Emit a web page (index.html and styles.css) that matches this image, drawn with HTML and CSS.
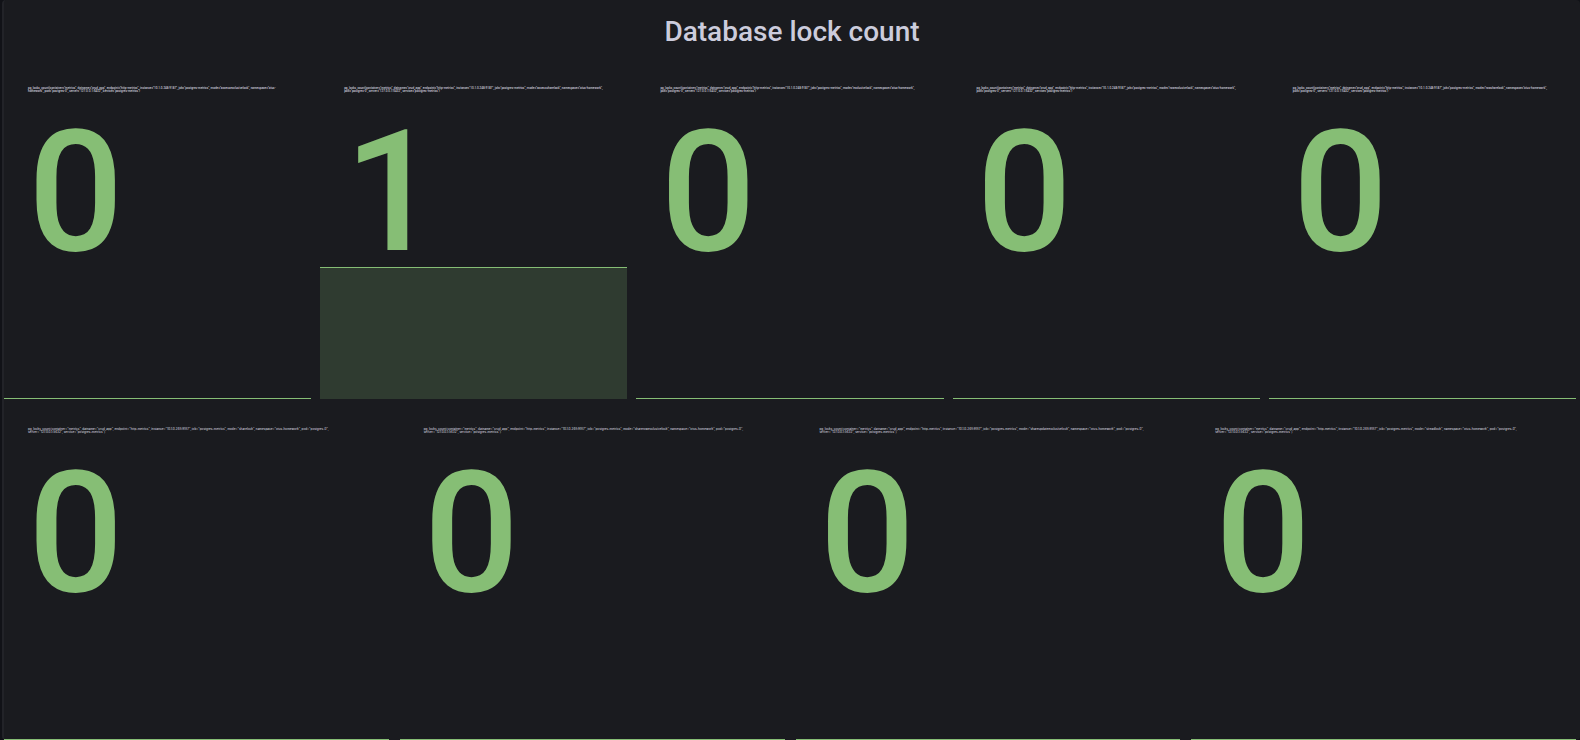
FILE: index.html
```
<!DOCTYPE html>
<html lang="en">
<head>
<meta charset="utf-8">
<title>Database lock count</title>
<link rel="stylesheet" href="styles.css">
</head>
<body>
<main class="panel">
  <header class="panel-header"><h1 class="panel-title">Database lock count</h1></header>
  <div class="stats">
    <div class="row row-five">
      <section class="stat"><p class="label">pg_locks_count{container="metrics", datname="crud_app", endpoint="http-metrics", instance="10.1.0.248:9187", job="postgres-metrics", mode="accessexclusivelock", namespace="otus-homework", pod="postgres-0", server="127.0.0.1:5432", service="postgres-metrics"}</p><div class="value">0</div><div class="spark"></div></section>
      <section class="stat"><p class="label">pg_locks_count{container="metrics", datname="crud_app", endpoint="http-metrics", instance="10.1.0.248:9187", job="postgres-metrics", mode="accesssharelock", namespace="otus-homework", pod="postgres-0", server="127.0.0.1:5432", service="postgres-metrics"}</p><div class="value">1</div><div class="spark spark-filled"></div></section>
      <section class="stat"><p class="label">pg_locks_count{container="metrics", datname="crud_app", endpoint="http-metrics", instance="10.1.0.248:9187", job="postgres-metrics", mode="exclusivelock", namespace="otus-homework", pod="postgres-0", server="127.0.0.1:5432", service="postgres-metrics"}</p><div class="value">0</div><div class="spark"></div></section>
      <section class="stat"><p class="label">pg_locks_count{container="metrics", datname="crud_app", endpoint="http-metrics", instance="10.1.0.248:9187", job="postgres-metrics", mode="rowexclusivelock", namespace="otus-homework", pod="postgres-0", server="127.0.0.1:5432", service="postgres-metrics"}</p><div class="value">0</div><div class="spark"></div></section>
      <section class="stat"><p class="label">pg_locks_count{container="metrics", datname="crud_app", endpoint="http-metrics", instance="10.1.0.248:9187", job="postgres-metrics", mode="rowsharelock", namespace="otus-homework", pod="postgres-0", server="127.0.0.1:5432", service="postgres-metrics"}</p><div class="value">0</div><div class="spark"></div></section>
    </div>
    <div class="row row-four">
      <section class="stat"><p class="label">pg_locks_count{container="metrics", datname="crud_app", endpoint="http-metrics", instance="10.1.0.248:9187", job="postgres-metrics", mode="sharelock", namespace="otus-homework", pod="postgres-0",<br>server="127.0.0.1:5432", service="postgres-metrics"}</p><div class="value">0</div><div class="spark"></div></section>
      <section class="stat"><p class="label">pg_locks_count{container="metrics", datname="crud_app", endpoint="http-metrics", instance="10.1.0.248:9187", job="postgres-metrics", mode="sharerowexclusivelock", namespace="otus-homework", pod="postgres-0",<br>server="127.0.0.1:5432", service="postgres-metrics"}</p><div class="value">0</div><div class="spark"></div></section>
      <section class="stat"><p class="label">pg_locks_count{container="metrics", datname="crud_app", endpoint="http-metrics", instance="10.1.0.248:9187", job="postgres-metrics", mode="shareupdateexclusivelock", namespace="otus-homework", pod="postgres-0",<br>server="127.0.0.1:5432", service="postgres-metrics"}</p><div class="value">0</div><div class="spark"></div></section>
      <section class="stat"><p class="label">pg_locks_count{container="metrics", datname="crud_app", endpoint="http-metrics", instance="10.1.0.248:9187", job="postgres-metrics", mode="sireadlock", namespace="otus-homework", pod="postgres-0",<br>server="127.0.0.1:5432", service="postgres-metrics"}</p><div class="value">0</div><div class="spark"></div></section>
    </div>
  </div>
</main>
</body>
</html>
```
FILE: styles.css
```
* {
  box-sizing: border-box;
}

body {
  margin: 0;
  padding: 0 0 0 2px;
  background: #111217;
  color: #ccccdc;
  font-family: Roboto, "Liberation Sans", sans-serif;
}

.panel {
  display: flex;
  flex-direction: column;
  min-height: 100vh;
  background: #1a1b1f;
  border-left: 2px solid #222328;
  border-radius: 4px;
}

.panel-header {
  display: flex;
  justify-content: center;
  padding: 16px 0 21px;
}

.panel-title {
  margin: 0;
  font-size: 28px;
  line-height: 32px;
  font-weight: 500;
}

.stats {
  flex: 1;
  display: grid;
  grid-template-rows: 1fr 1fr;
  gap: 11px;
  padding-right: 4px;
}

.row {
  display: grid;
}

.row-five {
  grid-template-columns: repeat(5, 1fr);
  gap: 9px;
}

.row-four {
  grid-template-columns: repeat(4, 1fr);
  gap: 11px;
}

.stat {
  display: grid;
  grid-template-rows: 3fr 2fr;
  position: relative;
  min-width: 0;
}

.label {
  position: absolute;
  top: 18px;
  left: 24px;
  right: 24px;
  margin: 0;
  font-size: 3px;
  line-height: 3px;
  font-weight: 500;
}

.row-four .label {
  font-family: Inter, Roboto, sans-serif;
  right: 8px;
}

.value {
  align-self: end;
  padding: 0 24px;
  color: #86be75;
  font-size: 168px;
  line-height: 148px;
  font-weight: 500;
}

.spark {
  border-bottom: 1px solid #86be75;
}

.spark-filled {
  background: #2f3b30;
  border-top: 1px solid #86be75;
  border-bottom: 0;
}
```
